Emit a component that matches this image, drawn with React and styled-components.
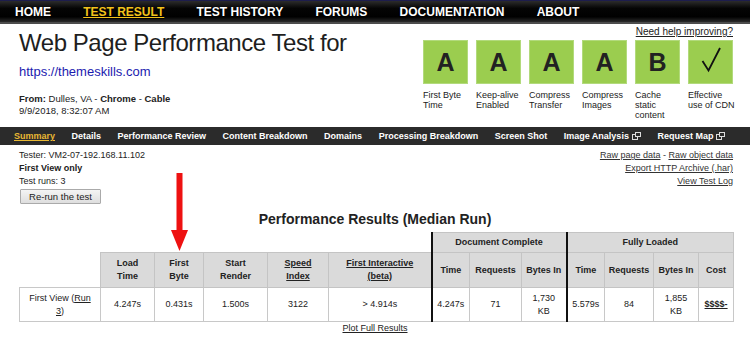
import React from 'react';
import styled, { createGlobalStyle } from 'styled-components';

const GlobalStyle = createGlobalStyle`
  html, body { margin: 0; padding: 0; background: #fff; }
  body { font-family: "Liberation Sans", Arial, sans-serif; color: #222; }
  a { color: inherit; }
`;

const grades = [
  { grade: 'A', label: ['First Byte', 'Time'] },
  { grade: 'A', label: ['Keep-alive', 'Enabled'] },
  { grade: 'A', label: ['Compress', 'Transfer'] },
  { grade: 'A', label: ['Compress', 'Images'] },
  { grade: 'B', label: ['Cache', 'static', 'content'] },
  { grade: 'check', label: ['Effective', 'use of CDN'] },
];

const tabs = [
  { name: 'Summary', active: true },
  { name: 'Details' },
  { name: 'Performance Review' },
  { name: 'Content Breakdown' },
  { name: 'Domains' },
  { name: 'Processing Breakdown' },
  { name: 'Screen Shot' },
  { name: 'Image Analysis', ext: true },
  { name: 'Request Map', ext: true },
];

const ExtIcon = () => (
  <svg width="9" height="8" viewBox="0 0 9 8">
    <rect x="0.5" y="2.5" width="5" height="5" fill="none" stroke="#ddd" strokeWidth="1" />
    <rect x="3.5" y="0.5" width="5" height="4" fill="#2b2b2b" stroke="#ddd" strokeWidth="1" />
  </svg>
);

const Check = () => (
  <svg width="45" height="44" viewBox="0 0 45 44">
    <path d="M14.5 21 L20.5 30.5 L32 8" fill="none" stroke="#111" strokeWidth="1.8" strokeLinejoin="miter" />
  </svg>
);

const App = () => {
  return (
    <Page>
      <GlobalStyle />
      <TopNav>
        <TopLink>HOME</TopLink>
        <TopLink $active>TEST RESULT</TopLink>
        <TopLink>TEST HISTORY</TopLink>
        <TopLink>FORUMS</TopLink>
        <TopLink>DOCUMENTATION</TopLink>
        <TopLink>ABOUT</TopLink>
      </TopNav>

      {/*Header*/}
      <Header>
        <TitleBlock>
          <Title>Web Page Performance Test for</Title>
          <Url>https://themeskills.com</Url>
          <Meta>
            <b>From:</b> Dulles, VA - <b>Chrome</b> - <b>Cable</b>
            <br />
            9/9/2018, 8:32:07 AM
          </Meta>
        </TitleBlock>
        <GradeColumn>
          <HelpLink>Need help improving?</HelpLink>
          <Grades>
            {grades.map((g, i) => (
              <Grade key={i}>
                <GradeBox>{g.grade === 'check' ? <Check /> : g.grade}</GradeBox>
                <GradeLabel>
                  {g.label.map((l, j) => (
                    <div key={j}>{l}</div>
                  ))}
                </GradeLabel>
              </Grade>
            ))}
          </Grades>
        </GradeColumn>
      </Header>

      {/*Tabs*/}
      <SubNav>
        {tabs.map((t) => (
          <Tab key={t.name} $active={t.active}>
            {t.name}
            {t.ext && <ExtIcon />}
          </Tab>
        ))}
      </SubNav>

      <InfoRow>
        <InfoText>
          <div>Tester: VM2-07-192.168.11.102</div>
          <b>First View only</b>
          <div>Test runs: 3</div>
          <RerunButton>Re-run the test</RerunButton>
        </InfoText>
        <RawLinks>
          <div><a>Raw page data</a> - <a>Raw object data</a></div>
          <div><a>Export HTTP Archive (.har)</a></div>
          <div><a>View Test Log</a></div>
        </RawLinks>
      </InfoRow>

      <ResultsTitle>Performance Results (Median Run)</ResultsTitle>

      <Results>
        <colgroup>
          {[81, 54, 49, 64, 61, 103, 38, 52, 45, 38, 49, 45, 35].map((w, i) => (
            <col key={i} style={{ width: w }} />
          ))}
        </colgroup>
        <tbody>
          <tr>
            <Blank colSpan={6} $h={20} />
            <Head colSpan={3} $thick $h={20}>Document Complete</Head>
            <Head colSpan={4} $thick $h={20}>Fully Loaded</Head>
          </tr>
          <tr>
            <Blank $h={35} />
            <Head $h={35}>Load<br />Time</Head>
            <Head>First<br />Byte</Head>
            <Head>Start<br />Render</Head>
            <Head><a>Speed<br />Index</a></Head>
            <Head><a>First Interactive<br />(beta)</a></Head>
            <Head $thick>Time</Head>
            <Head>Requests</Head>
            <Head>Bytes In</Head>
            <Head $thick>Time</Head>
            <Head>Requests</Head>
            <Head>Bytes In</Head>
            <Head>Cost</Head>
          </tr>
          <tr>
            <Cell $h={34}>First View (<a>Run<br />3</a>)</Cell>
            <Cell>4.247s</Cell>
            <Cell>0.431s</Cell>
            <Cell>1.500s</Cell>
            <Cell>3122</Cell>
            <Cell>&gt; 4.914s</Cell>
            <Cell $thick>4.247s</Cell>
            <Cell>71</Cell>
            <Cell>1,730<br />KB</Cell>
            <Cell $thick>5.579s</Cell>
            <Cell>84</Cell>
            <Cell>1,855<br />KB</Cell>
            <Cell><CostLink>$$$$-</CostLink></Cell>
          </tr>
        </tbody>
      </Results>

      <PlotLink><a>Plot Full Results</a></PlotLink>

      {/*Red arrow pointing at First Byte*/}
      <Arrow width="17" height="78" viewBox="0 0 17 78">
        <rect x="5.5" y="0" width="6" height="58" fill="#ee1111" />
        <polygon points="0,57 17,57 8.5,78" fill="#ee1111" />
      </Arrow>
    </Page>
  );
};

export default App;

const Page = styled.div`
  position: relative;
  width: 750px;
  height: 339px;
  overflow: hidden;
`;

//Top navigation
const TopNav = styled.nav`
  height: 21px;
  border-top: 1px solid #1d1d4d;
  border-bottom: 2px solid #4c4c4c;
  background: linear-gradient(#2c2c2c, #050505 35%, #000 75%, #2a2a2a);
  display: flex;
  align-items: center;
  gap: 32.2px;
  padding-left: 15px;
`;

const TopLink = styled.a`
  font-size: 12px;
  font-weight: bold;
  color: ${({ $active }) => ($active ? '#f2c21b' : '#fff')};
  text-decoration: ${({ $active }) => ($active ? 'underline' : 'none')};
  text-shadow: 0 1px 1px #000;
`;

//Header
const Header = styled.div`
  height: 103px;
  display: flex;
  justify-content: space-between;
  padding: 0 17px 0 19px;
`;

const TitleBlock = styled.div`
  padding-top: 4px;
`;

const Title = styled.h1`
  margin: 0;
  font-size: 24px;
  line-height: 29px;
  font-weight: normal;
  letter-spacing: -0.45px;
  color: #1e1e1e;
`;

const Url = styled.div`
  margin-top: 7px;
  font-size: 13px;
  line-height: 16px;
  color: #1b1baf;
`;

const Meta = styled.div`
  margin-top: 13px;
  font-size: 9.5px;
  line-height: 12px;
  color: #222;
`;

const GradeColumn = styled.div`
  display: flex;
  flex-direction: column;
  align-items: flex-end;
  padding-top: 2px;
`;

const HelpLink = styled.a`
  font-size: 10px;
  line-height: 12px;
  text-decoration: underline;
  color: #222;
`;

const Grades = styled.div`
  display: flex;
  gap: 8px;
  margin-top: 2px;
`;

const Grade = styled.div`
  width: 45px;
`;

const GradeBox = styled.div`
  box-sizing: border-box;
  width: 45px;
  height: 44px;
  background: #9bcd4f;
  border: 1px solid #b2da7c;
  display: flex;
  align-items: center;
  justify-content: center;
  font-size: 25px;
  font-weight: bold;
  color: #222;
  & > svg { margin: -1px; }
`;

const GradeLabel = styled.div`
  margin-top: 6px;
  font-size: 9px;
  line-height: 10px;
  color: #222;
  white-space: nowrap;
`;

//Sub navigation
const SubNav = styled.nav`
  height: 18px;
  background: #2b2b2b;
  display: flex;
  align-items: center;
  gap: 16.5px;
  padding-left: 14px;
`;

const Tab = styled.a`
  display: flex;
  align-items: center;
  gap: 3px;
  font-size: 9px;
  font-weight: bold;
  color: ${({ $active }) => ($active ? '#e9b933' : '#fff')};
  text-decoration: ${({ $active }) => ($active ? 'underline' : 'none')};
`;

//Info
const InfoRow = styled.div`
  display: flex;
  justify-content: space-between;
  padding: 4px 17px 0 19px;
  font-size: 9px;
  line-height: 13px;
`;

const InfoText = styled.div`
  display: flex;
  flex-direction: column;
  align-items: flex-start;
`;

const RerunButton = styled.button`
  margin-top: 1px;
  margin-left: 1px;
  width: 81px;
  height: 15px;
  padding: 0;
  font-family: inherit;
  font-size: 9.5px;
  color: #222;
  background: linear-gradient(#f4f4f4, #dedede);
  border: 1px solid #aaa;
  border-radius: 1px;
`;

const RawLinks = styled.div`
  text-align: right;
  color: #333;
  & a { text-decoration: underline; }
`;

const ResultsTitle = styled.h2`
  margin: 7px 0 0;
  text-align: center;
  font-size: 14px;
  line-height: 16px;
  font-weight: bold;
  color: #222;
`;

//Results table
const Results = styled.table`
  margin: 5px 0 0 19px;
  width: 714px;
  border-collapse: collapse;
  table-layout: fixed;
  font-size: 9px;
  line-height: 13px;
`;

const Blank = styled.td`
  border: none;
  padding: 0;
  height: ${({ $h }) => ($h ? $h - 1 + 'px' : 'auto')};
`;

const Head = styled.th`
  background: #dadada;
  border: 1px solid #c4c4c4;
  border-left: ${({ $thick }) => ($thick ? '2px solid #111' : '1px solid #c4c4c4')};
  padding: 0 2px;
  text-align: center;
  font-weight: bold;
  white-space: nowrap;
  color: #222;
  height: ${({ $h }) => ($h ? $h - 1 + 'px' : 'auto')};
  & a { text-decoration: underline; }
`;

const Cell = styled.td`
  border: 1px solid #c8c8c8;
  border-left: ${({ $thick }) => ($thick ? '2px solid #111' : '1px solid #c8c8c8')};
  padding: 0 2px;
  text-align: center;
  white-space: nowrap;
  color: #222;
  height: ${({ $h }) => ($h ? $h - 1 + 'px' : 'auto')};
  & a { text-decoration: underline; }
`;

const CostLink = styled.a`
  font-weight: bold;
  text-decoration: underline;
`;

const PlotLink = styled.div`
  text-align: center;
  font-size: 9px;
  line-height: 13px;
  & a { text-decoration: underline; }
`;

const Arrow = styled.svg`
  position: absolute;
  left: 171px;
  top: 173px;
`;
